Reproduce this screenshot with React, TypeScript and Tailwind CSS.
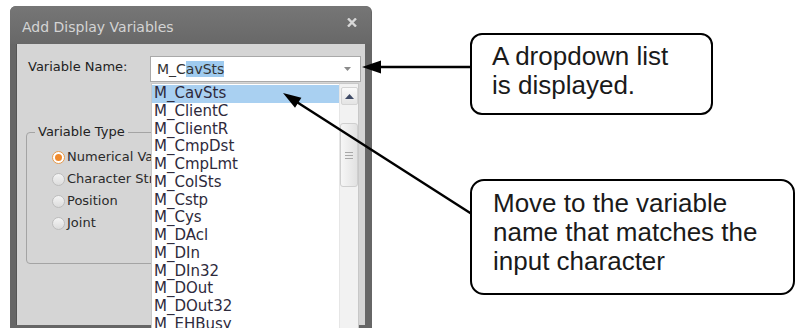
const items = [
  "M_CavSts",
  "M_ClientC",
  "M_ClientR",
  "M_CmpDst",
  "M_CmpLmt",
  "M_ColSts",
  "M_Cstp",
  "M_Cys",
  "M_DAcl",
  "M_DIn",
  "M_DIn32",
  "M_DOut",
  "M_DOut32",
  "M_EHBusy",
];

const types = ["Numerical Value", "Character String", "Position", "Joint"];

const Radio = (props: { checked: boolean }) =>
  props.checked ? (
    <span className="w-[13px] h-[13px] rounded-full border border-[#e59a4c] bg-white flex items-center justify-center">
      <span className="w-[7px] h-[7px] rounded-full bg-[#f08a2c]" />
    </span>
  ) : (
    <span className="w-[13px] h-[13px] rounded-full border border-[#bdbdbd] bg-gradient-to-b from-[#f4f4f4] to-[#dcdcdc]" />
  );

const DropdownList = () => (
  <div className="absolute left-[134px] top-[39px] w-[208px] h-[260px] bg-white border border-[#c8c8c8] flex">
    <div className="flex-1 flex flex-col pt-[1px]">
      {items.map((name, i) => (
        <div
          key={name}
          className={
            "h-[17.75px] leading-[17.75px] pl-[2px] text-[15px] text-[#2e2a3c] " +
            (i === 0 ? "bg-[#a9d0f1]" : "")
          }
        >
          {name}
        </div>
      ))}
    </div>
    <div className="w-[19px] bg-[#f2f2f2] flex flex-col items-center pt-[3px] border-l border-[#e6e6e6]">
      <div className="w-[17px] h-[18px] bg-gradient-to-b from-[#fafafa] to-[#e4e4e4] border border-[#d4d4d4] rounded-[2px] flex items-center justify-center">
        <svg width="9" height="5" viewBox="0 0 9 5">
          <polygon points="0,5 4.5,0 9,5" fill="#3e4a66" />
        </svg>
      </div>
      <div className="mt-[18px] w-[18px] h-[64px] bg-gradient-to-r from-[#f6f6f6] to-[#e2e2e2] border border-[#cfcfcf] rounded-[3px] flex flex-col items-center justify-center gap-[2px]">
        <span className="w-[8px] h-px bg-[#a8a8a8]" />
        <span className="w-[8px] h-px bg-[#a8a8a8]" />
        <span className="w-[8px] h-px bg-[#a8a8a8]" />
      </div>
    </div>
  </div>
);

const Dialog = () => (
  <div className="w-[362px] h-[322px] bg-[#666666] rounded-t-[6px] flex flex-col pl-[6px] pr-[7px] pb-[3px] font-['DejaVu_Sans',sans-serif]">
    <div className="h-[38px] -mx-[6px] pl-[12px] pr-[14px] pt-[4px] flex items-center justify-between bg-gradient-to-b from-[#767676] to-[#686868] rounded-t-[6px]">
      <span className="text-[14px] text-[#d4d4d4]">Add Display Variables</span>
      <svg width="10" height="9" viewBox="0 0 10 9" className="-mt-[9px]">
        <path d="M1 0.5 L9 8.5 M9 0.5 L1 8.5" stroke="#d8d8d8" strokeWidth="2.4" />
      </svg>
    </div>
    <div className="relative flex-1 bg-[#d5d5d5] border-l border-[#555555] pt-[12px] pl-[9px] flex flex-col">
      <div className="flex items-center">
        <span className="ml-[2px] w-[122px] text-[13px] text-[#222222] -mt-[5px]">Variable Name:</span>
        <div className="w-[211px] h-[26px] bg-white border border-[#a9a9a9] flex items-center pl-[6px] pr-[9px]">
          <span className="text-[14px] text-[#333333]">
            M_C<span className="bg-[#9fcbef]">avSts</span>
          </span>
          <svg width="7" height="4" viewBox="0 0 7 4" className="ml-auto">
            <polygon points="0,0 7,0 3.5,4" fill="#8a8a8a" />
          </svg>
        </div>
      </div>
      <fieldset className="mt-[42px] w-[320px] h-[140px] border border-[#a4a4a4] rounded-[4px] pl-[25px] pt-[6px]">
        <legend className="-ml-[17px] px-[3px] text-[13px] leading-[16px] text-[#222222]">Variable Type</legend>
        {types.map((t, i) => (
          <div key={t} className="h-[22px] flex items-center gap-[2px]">
            <Radio checked={i === 0} />
            <span className="text-[13px] text-[#2a2a2a]">{t}</span>
          </div>
        ))}
      </fieldset>
      <DropdownList />
    </div>
  </div>
);

export default function App() {
  return (
    <div className="relative w-[797px] h-[328px] overflow-hidden bg-white flex">
      <div className="pl-[10px] pt-[6px]">
        <Dialog />
      </div>
      <div className="ml-[98px] flex flex-col font-['Liberation_Sans',Arial,sans-serif] text-[26px] leading-[29px] text-[#1a1a1a]">
        <div className="mt-[33px] w-[243px] h-[82px] border-2 border-black rounded-[12px] pl-[20px] pt-[7px]">
          A dropdown list
          <br />
          is displayed.
        </div>
        <div className="mt-[64px] w-[325px] h-[116px] border-2 border-black rounded-[14px] pl-[21px] pt-[8px]">
          Move to the variable
          <br />
          name that matches the
          <br />
          input character
        </div>
      </div>
      <svg className="absolute left-0 top-0 pointer-events-none" width="797" height="328">
        <line x1="471" y1="67" x2="378" y2="67" stroke="black" strokeWidth="2.5" />
        <polygon points="362,67 381,60.5 381,73.5" fill="black" />
        <line x1="471" y1="213.5" x2="296" y2="101.5" stroke="black" strokeWidth="2.5" />
        <polygon points="283,93 301.4,97.7 295,107.8" fill="black" />
      </svg>
    </div>
  );
}
